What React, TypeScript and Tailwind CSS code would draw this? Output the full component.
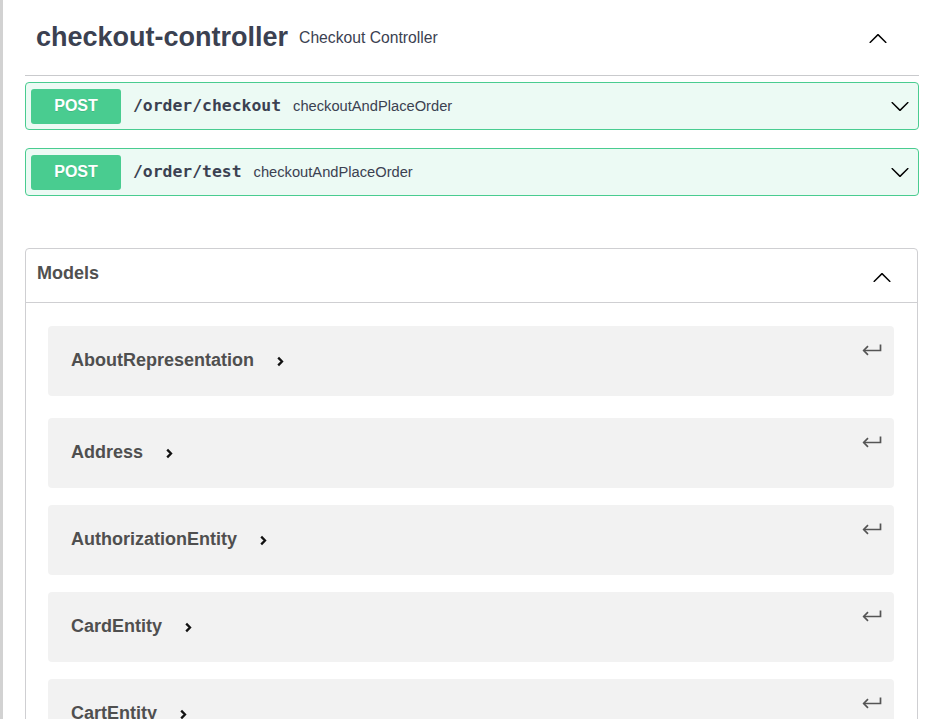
import React from 'react';

const ops = [
  { method: 'POST', path: '/order/checkout', summary: 'checkoutAndPlaceOrder' },
  { method: 'POST', path: '/order/test', summary: 'checkoutAndPlaceOrder' },
];

const models = [
  'AboutRepresentation',
  'Address',
  'AuthorizationEntity',
  'CardEntity',
  'CartEntity',
  'CartItemEntity',
];

function ArrowDown() {
  return (
    <svg width="20" height="20" viewBox="0 0 20 20" className="fill-current">
      <path d="M17.418 6.109c.272-.268.709-.268.979 0s.271.701 0 .969l-7.908 7.83c-.27.268-.707.268-.979 0l-7.908-7.83c-.27-.268-.27-.701 0-.969.271-.268.709-.268.979 0L10 13.25l7.418-7.141z" />
    </svg>
  );
}

function ArrowUp() {
  return (
    <svg width="20" height="20" viewBox="0 0 20 20" className="fill-current">
      <path d="M17.418 14.908c.272.268.709.268.979 0s.271-.701 0-.969l-7.908-7.83c-.27-.268-.707-.268-.979 0l-7.908 7.83c-.27.268-.27.701 0 .969.271.268.709.268.979 0L10 7.767l7.418 7.141z" />
    </svg>
  );
}

function JumpTo() {
  return (
    <svg width="20" height="12" viewBox="0 0 20 12" fill="none" stroke="currentColor" strokeWidth="1.7">
      <path d="M18.5 0.5V6.5H2" />
      <path d="M6 2.2L1.7 6.5L6 10.8" />
    </svg>
  );
}

function SmallChevron() {
  return (
    <svg width="9" height="11" viewBox="0 0 9 11" fill="none" stroke="#111" strokeWidth="2.3">
      <path d="M2.2 1.6L6 5.5L2.2 9.4" />
    </svg>
  );
}

export default function App() {
  return (
    <div className="min-h-screen bg-white border-l-[3px] border-[#d2d2d2] pl-[22px] pr-[6px] font-['Liberation_Sans',Arial,sans-serif] text-[#3b4151]">
      {/* Tag header */}
      <div className="h-[76px] flex items-center border-b border-[#c9cacd] pl-[11px] pr-[31px]">
        <h3 className="text-[27px] font-bold leading-none">checkout-controller</h3>
        <span className="text-[15.7px] ml-[11px] mt-[1px]">Checkout Controller</span>
        <span className="ml-auto text-black">
          <ArrowUp />
        </span>
      </div>

      {/* Operations */}
      <div className="mt-[6px] flex flex-col gap-[18px]">
        {ops.map((op) => (
          <div
            key={op.path}
            className="h-[48px] flex items-center border border-[#49cc90] bg-[#49cc90]/10 rounded-[4px] pl-[5px] pr-[8px]"
          >
            <span className="w-[90px] h-[35px] flex items-center justify-center rounded-[3px] bg-[#49cc90] text-white text-[16px] font-bold [text-shadow:0_1px_0_rgba(0,0,0,0.1)]">
              {op.method}
            </span>
            <span className="ml-[12px] font-['DejaVu_Sans_Mono',monospace] font-bold text-[16.4px]">
              {op.path}
            </span>
            <span className="ml-[12px] text-[14.7px]">{op.summary}</span>
            <span className="ml-auto text-black">
              <ArrowDown />
            </span>
          </div>
        ))}
      </div>

      {/* Models */}
      <section className="mt-[52px] mr-[1px] border border-[#cfcfd2] rounded-[4px]">
        <div className="h-[54px] flex items-center border-b border-[#cfcfd2] pl-[11px] pr-[25px]">
          <h4 className="text-[18px] font-bold text-[#505050] -mt-[4px]">Models</h4>
          <span className="ml-auto text-black mt-[2px]">
            <ArrowUp />
          </span>
        </div>
        <div className="pt-[23px] pl-[22px] pr-[23px] pb-[17px] flex flex-col">
          {models.map((m, i) => (
            <div
              key={m}
              className={`relative h-[70px] flex items-center rounded-[4px] bg-black/5 pl-[23px] ${i === 0 ? 'mb-[22px]' : 'mb-[17px]'}`}
            >
              <span className="text-[18px] font-bold text-[#4f4f4f] -mt-[2px]">{m}</span>
              <span className="ml-[22px] mt-[1px]">
                <SmallChevron />
              </span>
              <span className="absolute right-[12px] top-[18px] text-[#555]">
                <JumpTo />
              </span>
            </div>
          ))}
        </div>
      </section>
    </div>
  );
}
